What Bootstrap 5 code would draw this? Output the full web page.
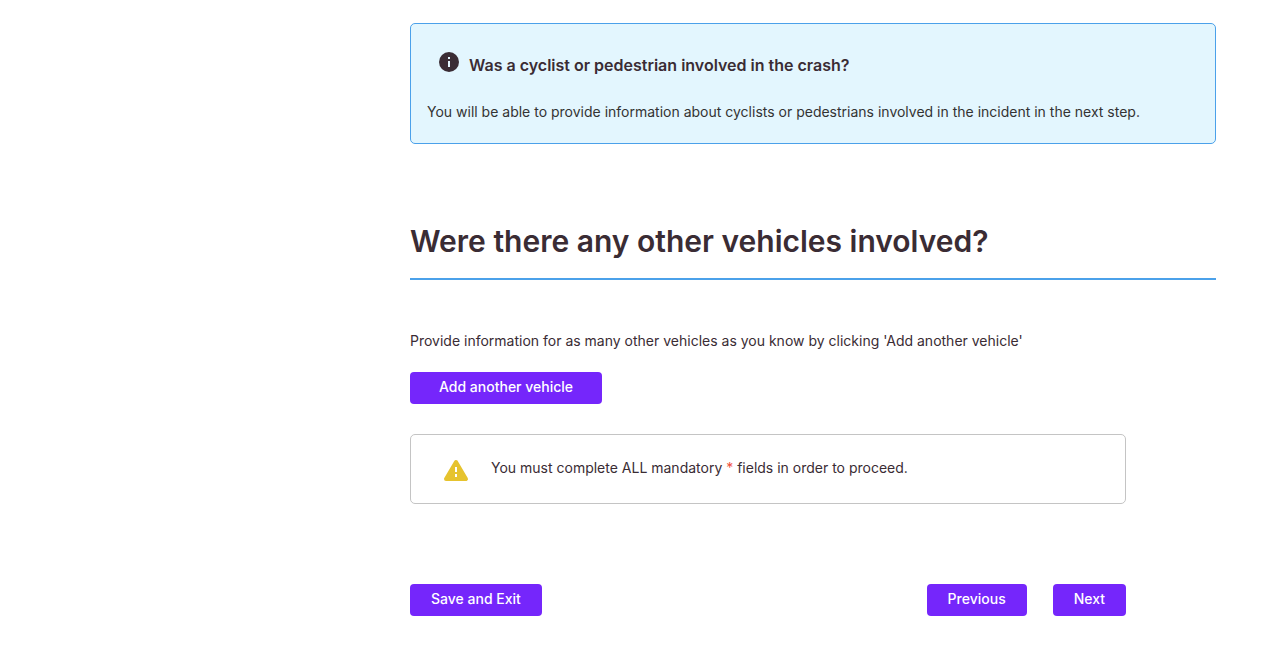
<!DOCTYPE html>
<html lang="en">
<head>
<meta charset="utf-8">
<meta name="viewport" content="width=device-width, initial-scale=1">
<title>Other vehicles involved</title>
<link href="https://cdn.jsdelivr.net/npm/bootstrap@5.3.0/dist/css/bootstrap.min.css" rel="stylesheet">
<style>
  body { font-family: Inter, "Liberation Sans", sans-serif; font-size: 14px; line-height: 20px; color: #3a2c34; }
  .page-shell { display: grid; grid-template-columns: minmax(0, 1fr) minmax(0, 806px); padding: 23px 59px 30px 0; }
  .step-content { grid-column: 2; }
  .info-note { background: #e3f6fe; border: 1px solid #4ba1ea; border-radius: 5px; padding: 26px 16px 21px; color: #333; }
  .info-head { padding-left: 10px; margin-bottom: 24px; color: #3a2c34; }
  .info-head h2 { font-size: 16px; line-height: 26px; font-weight: 600; padding-top: 2px; }
  .section-title { font-size: 30px; line-height: 40px; font-weight: 600; border-bottom: 2px solid #4ba1ea; padding-bottom: 17px; margin: 77px 0 51px; }
  .form-area { max-width: 716px; }
  .add-hint { margin-bottom: 21px; }
  .btn-brand { --bs-btn-color: #fff; --bs-btn-bg: #7526fb; --bs-btn-hover-color: #fff; --bs-btn-hover-bg: #5f17d8; --bs-btn-active-color: #fff; --bs-btn-active-bg: #5212bd; --bs-btn-border-width: 0; --bs-btn-border-radius: 4px; --bs-btn-font-size: 14px; --bs-btn-font-weight: 500; --bs-btn-line-height: 20px; --bs-btn-padding-x: 21px; --bs-btn-padding-y: 5px; height: 32px; padding-bottom: 7px; }
  .btn-wide { --bs-btn-padding-x: 29px; }
  .warn-note { border: 1px solid #c4c4c4; border-radius: 5px; padding: 23px 32px 21px; margin: 30px 0 80px; gap: 22px; }
  .required { color: #f0503c; }
  .step-actions { gap: 26px; }
</style>
</head>
<body>
<main class="page-shell">
  <div class="step-content">
    <section class="info-note">
      <div class="info-head d-flex gap-2">
        <svg class="flex-shrink-0" width="24" height="24" viewBox="0 0 24 24" aria-hidden="true">
          <circle cx="12" cy="12" r="10" fill="#3a2c34"/>
          <path fill="#e3f6fe" d="M11 7h2v2h-2zM11 11h2v6h-2z"/>
        </svg>
        <h2 class="mb-0">Was a cyclist or pedestrian involved in the crash?</h2>
      </div>
      <p class="mb-0">You will be able to provide information about cyclists or pedestrians involved in the incident in the next step.</p>
    </section>
    <h1 class="section-title">Were there any other vehicles involved?</h1>
    <div class="form-area">
      <p class="add-hint">Provide information for as many other vehicles as you know by clicking 'Add another vehicle'</p>
      <button type="button" class="btn btn-brand btn-wide">Add another vehicle</button>
      <div class="warn-note d-flex">
        <svg class="flex-shrink-0" width="26" height="24" viewBox="0 0 26 24" aria-hidden="true">
          <path fill="#e6c32e" stroke="#e6c32e" stroke-width="4" stroke-linejoin="round" d="M13 4 23 21H3z"/>
          <path fill="#fff" d="M12 9h2v5h-2zM12 16h2v3h-2z"/>
        </svg>
        <p class="mb-0">You must complete ALL mandatory <span class="required">*</span> fields in order to proceed.</p>
      </div>
      <div class="step-actions d-flex">
        <button type="button" class="btn btn-brand me-auto">Save and Exit</button>
        <button type="button" class="btn btn-brand">Previous</button>
        <button type="button" class="btn btn-brand">Next</button>
      </div>
    </div>
  </div>
</main>
<script src="https://cdn.jsdelivr.net/npm/bootstrap@5.3.0/dist/js/bootstrap.bundle.min.js"></script>
</body>
</html>
